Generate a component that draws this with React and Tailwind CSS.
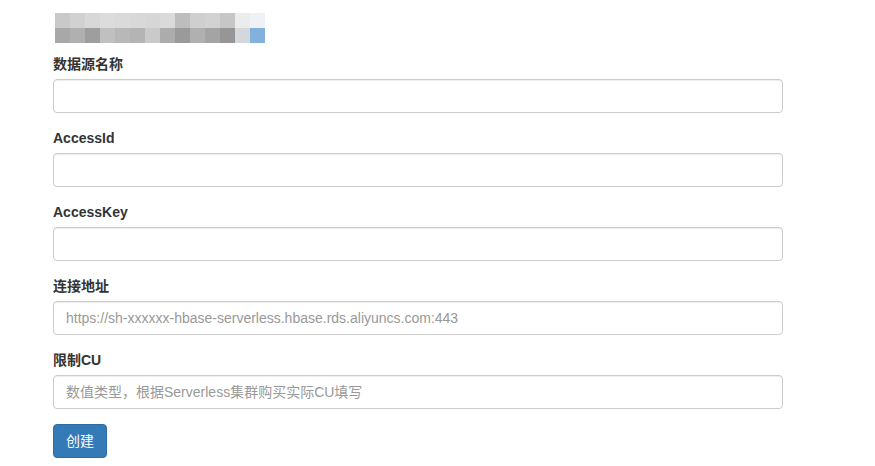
const mosaicTop = ["#c9c9c9", "#d1d1d1", "#d8d8d8", "#dcdcdc", "#dadada", "#d8d8d8", "#d6d6d6", "#dadada", "#bdbdbd", "#cfcfcf", "#d2d2d2", "#c6c6c6", "#ececec", "#eef2f6"];
const mosaicBottom = ["#a8a8a8", "#b0b0b0", "#9e9e9e", "#c0c0c0", "#b8b8b8", "#b4b4b4", "#cacaca", "#acacac", "#9a9a9a", "#b0b0b0", "#a4a4a4", "#969696", "#d4d8dc", "#82b2dc"];

const fields = [
  { label: "数据源名称", placeholder: "" },
  { label: "AccessId", placeholder: "" },
  { label: "AccessKey", placeholder: "" },
  { label: "连接地址", placeholder: "https://sh-xxxxxx-hbase-serverless.hbase.rds.aliyuncs.com:443" },
  { label: "限制CU", placeholder: "数值类型，根据Serverless集群购买实际CU填写" },
];

function Field({ label, placeholder }) {
  return (
    <div className="mb-[15px]">
      <label className="block mb-[5px] text-[14px] leading-[20px] font-bold text-[#333]">{label}</label>
      <input
        type="text"
        placeholder={placeholder}
        className="block w-full h-[34px] px-3 text-[14px] text-[#555] placeholder:text-[#999] bg-white border border-[#ccc] rounded-[4px] shadow-[inset_0_1px_1px_rgba(0,0,0,0.075)] outline-none"
      />
    </div>
  );
}

export default function App() {
  return (
    <div className="w-[875px] h-[466px] bg-white overflow-hidden" style={{ fontFamily: '"Liberation Sans", "Noto Sans CJK SC", sans-serif' }}>
      <div className="pl-[53px] pt-[13px] w-[783px]">
        {/* blurred title */}
        <div className="ml-[2px] mb-[11px] blur-[0.4px]">
          <div className="flex">
            {mosaicTop.map((c, i) => (
              <div key={i} className="w-[15px] h-[15px]" style={{ background: c }} />
            ))}
          </div>
          <div className="flex">
            {mosaicBottom.map((c, i) => (
              <div key={i} className="w-[15px] h-[15px]" style={{ background: c }} />
            ))}
          </div>
        </div>
        <form>
          {fields.map((f) => (
            <Field key={f.label} {...f} />
          ))}
          <button
            type="button"
            className="h-[34px] px-3 text-[14px] text-white bg-[#337ab7] border border-[#2e6da4] rounded-[4px]"
          >
            创建
          </button>
        </form>
      </div>
    </div>
  );
}
